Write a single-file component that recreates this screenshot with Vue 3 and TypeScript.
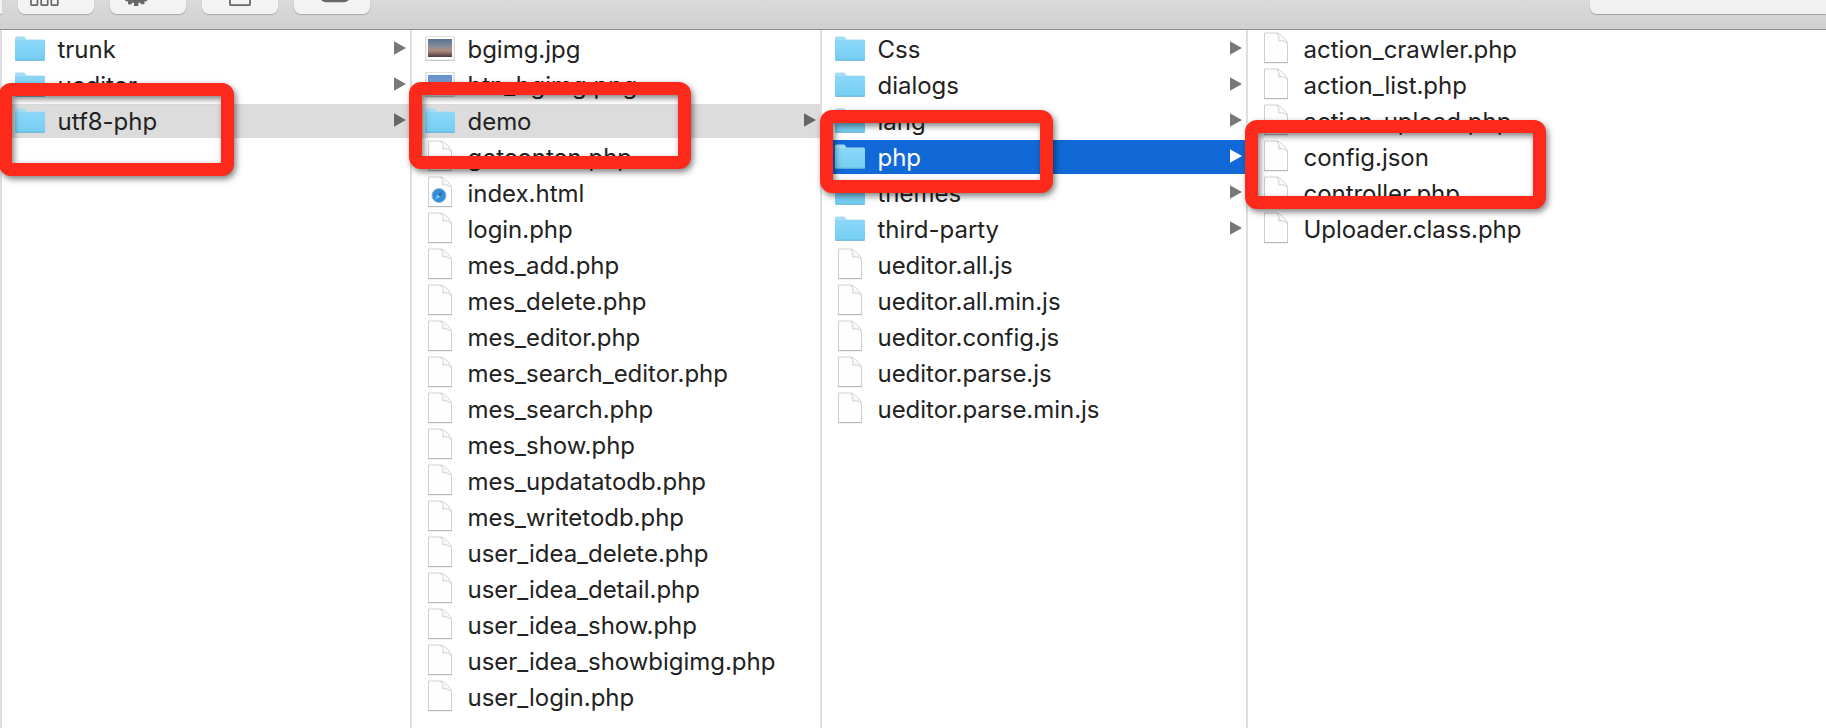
<template>
    <div class="Finder">
        <div class="Toolbar">
            <div class="ToolButton First"></div>
            <div class="ToolButton">
                <svg width="76" height="14" viewBox="0 0 76 14">
                    <g fill="none" stroke="#686868" stroke-width="1.700">
                        <rect x="13" y="-2" width="6.500" height="7.200" rx="1" />
                        <rect x="23.200" y="-2" width="6.500" height="7.200" rx="1" />
                        <rect x="33.300" y="-2" width="6.500" height="7.200" rx="1" />
                    </g>
                </svg>
            </div>
            <div class="ToolButton">
                <svg width="76" height="14" viewBox="0 0 76 14">
                    <path d="M15 0 L16 1.500 L18 1.200 L18 4.200 L21 4.500 L22.500 2.500 L24 3 V6 H28.300 V3 L30 2.500 L31.500 4.500 L34.500 4 L34.500 1.200 L36.500 1.500 L37.500 0 Z"
                        fill="#686868" />
                </svg>
            </div>
            <div class="ToolButton">
                <svg width="76" height="14" viewBox="0 0 76 14">
                    <rect x="28" y="-4" width="20" height="9.200" rx="1" fill="none" stroke="#686868" stroke-width="1.800" />
                </svg>
            </div>
            <div class="ToolButton">
                <svg width="76" height="14" viewBox="0 0 76 14">
                    <rect x="26" y="-12" width="30" height="14.200" rx="6" fill="#686868" />
                </svg>
            </div>
            <div class="Search"></div>
        </div>
        <div class="Columns">
            <div v-for="(Column, Index) in Columns" :key="Index" class="Column">
                <div v-for="Item in Column" :key="Item.Name" class="Row" :class="Item.State">
                    <svg class="Icon" width="30" height="34" viewBox="0 0 30 34">
                        <template v-if="Item.Kind === 'folder'">
                            <path d="M0 28 V6 Q0 4.500 1.500 4.500 H8.500 Q9.500 4.500 10.200 5.500 L11.500 7.500 H28.500 Q30 7.500 30 9 V28 Z"
                                fill="#a3dcf6" />
                            <path d="M0 9 H30 V28 Q30 28.500 29 28.500 H1 Q0 28.500 0 28 Z" fill="url(#FolderFill)" />
                            <path d="M0 9 H30" stroke="#7fcdef" stroke-width="0.800" />
                            <path d="M0.500 28.200 H29.500" stroke="#65b2d6" stroke-width="1" />
                        </template>
                        <template v-else-if="Item.Kind === 'jpg' || Item.Kind === 'png'">
                            <rect x="0.500" y="5" width="29" height="24" fill="#c4c4c4" />
                            <rect x="1" y="4.500" width="28" height="23.500" fill="#ffffff" stroke="#cfcfcf" stroke-width="0.600" />
                            <rect x="3" y="7" width="24" height="18" :fill="`url(#${Item.Kind}Fill)`" />
                        </template>
                        <template v-else>
                            <path d="M3.500 1 H15.500 C19 1 26.500 8.500 26.500 12 V30.500 H3.500 Z" fill="#fefefe" stroke="#d0d0d0" />
                            <path d="M3 30.700 H27" stroke="#b4b4b4" />
                            <path d="M15.500 1 Q19 4 17.800 9 Q24 8 26.500 12" fill="#f8f8f8" stroke="#d0d0d0" />
                            <template v-if="Item.Kind === 'html'">
                                <circle cx="14" cy="19.500" r="7" fill="#2f8fdd" stroke="#9db6c9" />
                                <path d="M18 15 L15.500 20.500 L10 24 L12.500 18.500 Z" fill="#7cc7f7" />
                                <path d="M18 15 L15.500 20.500 L12.500 18.500 Z" fill="#2665a8" />
                            </template>
                        </template>
                    </svg>
                    <span class="Name">{{ Item.Name }}</span>
                    <svg v-if="Item.Kind === 'folder'" class="Arrow" width="12" height="14" viewBox="0 0 12 14">
                        <path d="M0 0.300 L12 7 L0 13.700 Z" />
                    </svg>
                </div>
            </div>
        </div>
        <div class="Mark MarkProject"></div>
        <div class="Mark MarkDemo"></div>
        <div class="Mark MarkPhp"></div>
        <div class="Mark MarkConfig"></div>
        <svg class="Defs" width="0" height="0">
            <linearGradient id="FolderFill" x1="0" y1="0" x2="0" y2="1">
                <stop offset="0" stop-color="#8bd8f9" />
                <stop offset="1" stop-color="#74cdf3" />
            </linearGradient>
            <linearGradient id="jpgFill" x1="0" y1="0" x2="0" y2="1">
                <stop offset="0" stop-color="#557391" />
                <stop offset="0.450" stop-color="#8d8f98" />
                <stop offset="0.650" stop-color="#b18b7b" />
                <stop offset="1" stop-color="#4d3a42" />
            </linearGradient>
            <linearGradient id="pngFill" x1="0" y1="0" x2="0" y2="1">
                <stop offset="0" stop-color="#6592cf" />
                <stop offset="1" stop-color="#8babd3" />
            </linearGradient>
        </svg>
    </div>
</template>

<script setup lang="ts">
interface FileItem {
    Name: string
    Kind: string
    State: string
}

const Folder = (Name: string, State: string = ""): FileItem => ({ Name, Kind: "folder", State })
const File = (Name: string, Kind: string = "file"): FileItem => ({ Name, Kind, State: "" })

const Columns: FileItem[][] = [
    [
        Folder("trunk"),
        Folder("ueditor"),
        Folder("utf8-php", "Opened")
    ],
    [
        File("bgimg.jpg", "jpg"),
        File("btn_bgimg.png", "png"),
        Folder("demo", "Opened"),
        File("getconten.php"),
        File("index.html", "html"),
        File("login.php"),
        File("mes_add.php"),
        File("mes_delete.php"),
        File("mes_editor.php"),
        File("mes_search_editor.php"),
        File("mes_search.php"),
        File("mes_show.php"),
        File("mes_updatatodb.php"),
        File("mes_writetodb.php"),
        File("user_idea_delete.php"),
        File("user_idea_detail.php"),
        File("user_idea_show.php"),
        File("user_idea_showbigimg.php"),
        File("user_login.php")
    ],
    [
        Folder("Css"),
        Folder("dialogs"),
        Folder("lang"),
        Folder("php", "Selected"),
        Folder("themes"),
        Folder("third-party"),
        File("ueditor.all.js"),
        File("ueditor.all.min.js"),
        File("ueditor.config.js"),
        File("ueditor.parse.js"),
        File("ueditor.parse.min.js")
    ],
    [
        File("action_crawler.php"),
        File("action_list.php"),
        File("action_upload.php"),
        File("config.json"),
        File("controller.php"),
        File("Uploader.class.php")
    ]
]
</script>

<style>
body {
    margin: 0;
    overflow: hidden;
}
</style>

<style scoped>
.Finder {
    position: relative;
    display: flex;
    flex-direction: column;
    width: 100%;
    height: 728px;
    overflow: hidden;
    background-color: #ffffff;
    font-family: Inter, "Liberation Sans", sans-serif;
    color: #222222;
}

.Toolbar {
    display: flex;
    gap: 16px;
    box-sizing: border-box;
    height: 30px;
    background: linear-gradient(#dadada, #d1d1d1);
    border-bottom: 1px solid #8e8e8e;
}

.ToolButton {
    width: 76px;
    height: 14px;
    background-color: #f3f3f3;
    border-radius: 0 0 7px 7px;
    box-shadow: 0 1px 1px #a9a9a9;

    svg {
        display: block;
    }

    &.First {
        width: 2px;
    }
}

.Search {
    margin-left: auto;
    width: 236px;
    height: 14px;
    background-color: #f1f1f1;
    border-radius: 0 0 0 7px;
    box-shadow: 0 1px 1px #a0a0a0;
}

.Columns {
    flex: 1;
    display: grid;
    grid-template-columns: 410px 410px 426px 1fr;
}

.Column {
    display: flex;
    flex-direction: column;
    gap: 2px;
    padding-top: 2px;
    border-left: 2px solid #dfdfdf;
}

.Row {
    display: flex;
    align-items: center;
    height: 34px;
    padding: 0 4px 0 13px;

    .Icon {
        flex: none;
        margin-right: 12.5px;
    }

    .Name {
        flex: 1;
        padding-top: 2px;
        font-size: 24px;
        line-height: 34px;
        letter-spacing: -0.03px;
        white-space: nowrap;
    }

    .Arrow {
        margin-bottom: 2px;
        fill: #787878;
    }

    &.Opened {
        background-color: #dcdcdc;

        .Arrow {
            fill: #666666;
        }
    }

    &.Selected {
        background-color: #1169d8;

        .Name {
            color: #ffffff;
        }

        .Arrow {
            fill: #ffffff;
        }
    }
}

/* Red annotation frames laid over the columns */
.Mark {
    position: absolute;
    box-sizing: border-box;
    border: 13px solid #fd2a1b;
    border-radius: 12px;
    filter: drop-shadow(2px 3px 3px rgba(0, 0, 0, 0.5));
}

.MarkProject {
    left: -1px;
    top: 83px;
    width: 235px;
    height: 93px;
}

.MarkDemo {
    left: 409px;
    top: 82px;
    width: 282px;
    height: 87px;
}

.MarkPhp {
    left: 820px;
    top: 110px;
    width: 233px;
    height: 83px;
}

.MarkConfig {
    left: 1245px;
    top: 120px;
    width: 301px;
    height: 89px;
}

.Defs {
    position: absolute;
}
</style>
